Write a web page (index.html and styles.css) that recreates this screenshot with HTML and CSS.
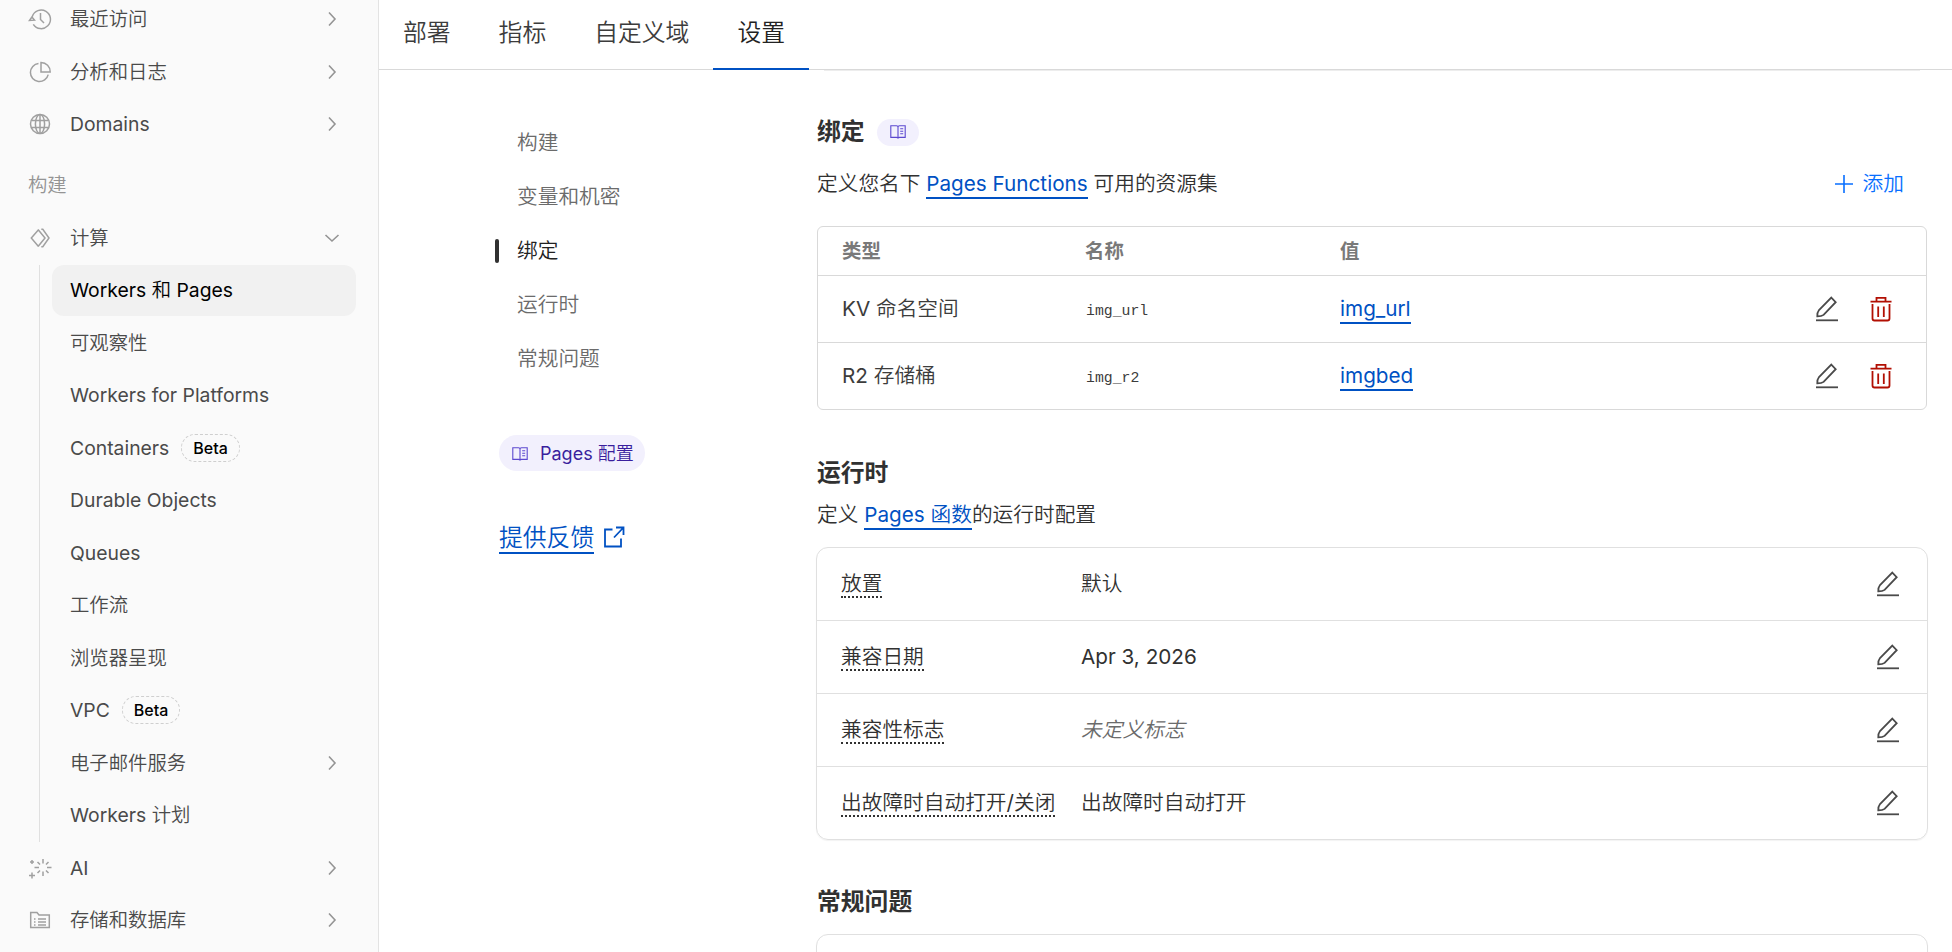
FILE: index.html
```html
<!DOCTYPE html>
<html lang="zh-CN">
<head>
    <meta charset="UTF-8">
    <meta name="viewport" content="width=device-width, initial-scale=1.0">
    <title>Workers 和 Pages - 设置</title>
    <link rel="stylesheet" href="styles.css">
</head>
<body>
    <!-- Shared icons -->
    <svg class="sprite" width="0" height="0">
        <symbol id="chevron" viewBox="0 0 16 16"><path d="M5 1.5l6 6.5-6 6.5"/></symbol>
        <symbol id="edit" viewBox="0 0 24 26">
            <path d="M16.3 1.6l4.4 4.6L8.600 18.900c-1.400 1.100-3.300 1.500-6.300 1.500-.1-2.700.3-4.700 1.700-6.400z"/>
            <path d="M1 24.300h22"/>
        </symbol>
        <symbol id="trash" viewBox="0 0 22 26">
            <path d="M.5 5.600h21M6.500 5V1.800h9V5M2.500 8v14.500q0 2 2 2h13q2 0 2-2V8M8.200 10.500v10.500M13.800 10.500v10.500"/>
        </symbol>
        <symbol id="book" viewBox="0 0 16 16">
            <path d="M.8 1.700h5.700q1.500 0 1.500 1.300v11.300q-.3-.9-1.500-.9H.8zM15.200 1.700H9.500Q8 1.700 8 3v11.300q.3-.9 1.500-.9h5.700zM10.200 4.800h3M10.200 7.300h3M10.200 9.800h3"/>
        </symbol>
    </svg>

    <div class="layout">
        <aside class="sidebar">
            <nav class="nav">
                <a class="nav-item">
                    <svg class="nav-icon" viewBox="0 0 24 24"><path d="M4.300 9.500a9.300 9.300 0 1 1 1 7.800M1.500 13.500l2.400-3.500 2.600 3.200zM12.500 6v6.500l3.500 3.500"/></svg>
                    <span>最近访问</span>
                    <svg class="chevron"><use href="#chevron"/></svg>
                </a>
                <a class="nav-item">
                    <svg class="nav-icon" viewBox="0 0 24 24"><path d="M10.500 3.600a9 9 0 1 0 9.700 11M13 2.500v9.500h9.200a9.200 9.200 0 0 0-9.200-9.500z"/></svg>
                    <span>分析和日志</span>
                    <svg class="chevron"><use href="#chevron"/></svg>
                </a>
                <a class="nav-item">
                    <svg class="nav-icon" viewBox="0 0 24 24"><circle cx="12" cy="12" r="9.500"/><ellipse cx="12" cy="12" rx="4.600" ry="9.500"/><path d="M12 2.500v19M3.500 8.500h17M3.500 15.500h17"/></svg>
                    <span>Domains</span>
                    <svg class="chevron"><use href="#chevron"/></svg>
                </a>

                <div class="nav-label">构建</div>

                <a class="nav-item">
                    <svg class="nav-icon" viewBox="0 0 24 24"><path d="M10.500 3.800L3.300 12l7.200 8.500M10 3.500l7 8.500-7 8.500M13.300 3.300h1.500l6.200 8.700-6.200 8.700h-1.500"/></svg>
                    <span>计算</span>
                    <svg class="chevron down"><use href="#chevron"/></svg>
                </a>
                <div class="subnav">
                    <a class="nav-item active">Workers 和 Pages</a>
                    <a class="nav-item">可观察性</a>
                    <a class="nav-item">Workers for Platforms</a>
                    <a class="nav-item">Containers <span class="beta">Beta</span></a>
                    <a class="nav-item">Durable Objects</a>
                    <a class="nav-item">Queues</a>
                    <a class="nav-item">工作流</a>
                    <a class="nav-item">浏览器呈现</a>
                    <a class="nav-item">VPC <span class="beta">Beta</span></a>
                    <a class="nav-item">电子邮件服务 <svg class="chevron"><use href="#chevron"/></svg></a>
                    <a class="nav-item">Workers 计划</a>
                </div>
                <a class="nav-item">
                    <svg class="nav-icon" viewBox="0 0 24 24"><path d="M15 3v4.500M15 15.500V20M6.500 11.500H11M19 11.500h4.500M9.500 6l2.500 2.500M18 14.500l2.500 2.500M20.500 6L18 8.500M12 14.500L9.500 17M4 4v4M2 6h4M4 16.500v6M1 19.500h6"/></svg>
                    <span>AI</span>
                    <svg class="chevron"><use href="#chevron"/></svg>
                </a>
                <a class="nav-item">
                    <svg class="nav-icon" viewBox="0 0 24 24"><path d="M2.700 19.500V4.500h6.300l2 2.500h10.300v12.500zM6 11h1.500M10 11h8M6 14h1.500M10 14h8M6 17h1.500M10 17h8"/></svg>
                    <span>存储和数据库</span>
                    <svg class="chevron"><use href="#chevron"/></svg>
                </a>
            </nav>
        </aside>

        <main class="main">
            <div class="tabs">
                <a class="tab">部署</a>
                <a class="tab">指标</a>
                <a class="tab">自定义域</a>
                <a class="tab active">设置</a>
            </div>

            <div class="content">
                <div class="toc">
                    <a class="toc-item">构建</a>
                    <a class="toc-item">变量和机密</a>
                    <a class="toc-item active">绑定</a>
                    <a class="toc-item">运行时</a>
                    <a class="toc-item">常规问题</a>
                    <a class="docs-pill"><svg class="book"><use href="#book"/></svg>Pages 配置</a>
                    <div class="feedback">
                        <a class="link">提供反馈</a>
                        <svg class="external" viewBox="0 0 22 22"><path d="M9.500 3.500H2v17h16v-8M13 1.500h7.500V9M20.500 1.500L11 11.500"/></svg>
                    </div>
                </div>

                <div class="settings">
                    <div class="card-end"></div>

                    <section class="bindings">
                        <h2>绑定 <span class="docs-badge"><svg class="book"><use href="#book"/></svg></span></h2>
                        <div class="desc-row">
                            <p>定义您名下 <a class="link">Pages Functions</a> 可用的资源集</p>
                            <a class="add"><svg class="plus" viewBox="0 0 18 18"><path d="M9 0v18M0 9h18"/></svg>添加</a>
                        </div>
                        <div class="table">
                            <div class="table-row table-head">
                                <span>类型</span>
                                <span>名称</span>
                                <span>值</span>
                            </div>
                            <div class="table-row">
                                <span>KV 命名空间</span>
                                <code>img_url</code>
                                <span><a class="link">img_url</a></span>
                                <svg class="edit"><use href="#edit"/></svg>
                                <svg class="trash"><use href="#trash"/></svg>
                            </div>
                            <div class="table-row">
                                <span>R2 存储桶</span>
                                <code>img_r2</code>
                                <span><a class="link">imgbed</a></span>
                                <svg class="edit"><use href="#edit"/></svg>
                                <svg class="trash"><use href="#trash"/></svg>
                            </div>
                        </div>
                    </section>

                    <section class="runtime">
                        <h2>运行时</h2>
                        <p>定义 <a class="link">Pages 函数</a>的运行时配置</p>
                        <div class="card">
                            <div class="card-row">
                                <span><span class="term">放置</span></span>
                                <span>默认</span>
                                <svg class="edit"><use href="#edit"/></svg>
                            </div>
                            <div class="card-row">
                                <span><span class="term">兼容日期</span></span>
                                <span>Apr 3, 2026</span>
                                <svg class="edit"><use href="#edit"/></svg>
                            </div>
                            <div class="card-row">
                                <span><span class="term">兼容性标志</span></span>
                                <em>未定义标志</em>
                                <svg class="edit"><use href="#edit"/></svg>
                            </div>
                            <div class="card-row">
                                <span><span class="term">出故障时自动打开/关闭</span></span>
                                <span>出故障时自动打开</span>
                                <svg class="edit"><use href="#edit"/></svg>
                            </div>
                        </div>
                    </section>

                    <section class="general">
                        <h2>常规问题</h2>
                        <div class="card">
                            <div class="card-row"></div>
                        </div>
                    </section>
                </div>
            </div>
        </main>
    </div>
</body>
</html>
```
FILE: styles.css
```css
* {
    box-sizing: border-box;
}
body {
    margin: 0;
    height: 952px;
    overflow: hidden;
    font-family: Inter, "Noto Sans CJK SC DemiLight", "Noto Sans CJK SC Light", "Noto Sans CJK SC", sans-serif;
    font-size: 20.7px;
    line-height: 1.25;
    color: #313131;
    background-color: #fff;
}
h2, p {
    margin: 0;
}
svg {
    display: block;
    flex: none;
    fill: none;
    stroke: currentColor;
}
.sprite {
    position: absolute;
}
.layout {
    display: flex;
    height: 952px;
    overflow: hidden;
}

/* Sidebar */
.sidebar {
    flex: none;
    width: 379px;
    background-color: #fafafa;
    border-right: 1px solid #e3e3e3;
    font-size: 19.35px;
    color: #4a4a4a;
}
.nav {
    /* list is scrolled a little past its top */
    margin-top: -7px;
    padding: 0 22px 0 28px;
}
.nav-item {
    display: flex;
    align-items: center;
    height: 52.5px;
    padding-right: 16px;
}
.nav-icon {
    width: 24px;
    height: 24px;
    margin-right: 18px;
    stroke-width: 1.5;
    color: #a0a0a0;
}
.chevron {
    width: 16px;
    height: 16px;
    margin-left: auto;
    stroke-width: 1.6;
    color: #949494;
}
.chevron.down {
    transform: rotate(90deg);
}
.nav-label {
    display: flex;
    align-items: center;
    height: 61px;
    padding-top: 9px;
    color: #949494;
}
.subnav {
    margin-left: 11px;
    padding-left: 12px;
    border-left: 1px solid #e0e0e0;
}
.subnav .nav-item {
    padding-left: 18px;
}
.subnav .active {
    height: 51px;
    margin: 1px 0 .5px;
    background-color: #f1f1f1;
    border-radius: 12px;
    color: #000;
}
.beta {
    margin-left: 12px;
    padding: 0 11px;
    border: 1px dashed #cfcfcf;
    border-radius: 14px;
    font-size: 16px;
    font-weight: 500;
    line-height: 26px;
    color: #000;
}

/* Tabs */
.main {
    flex: 1;
}
.tabs {
    display: flex;
    height: 70px;
    border-bottom: 1px solid #d9d9d9;
}
.tab {
    display: flex;
    align-items: center;
    height: 70px;
    padding: 0 24px 5px;
    font-size: 23.8px;
    color: #3c3c3c;
}
.tab.active {
    color: #222;
    box-shadow: inset 0 -2px #0051c3;
}
.content {
    display: grid;
    grid-template-columns: 437px 1112px;
}

/* Page contents list */
.toc {
    padding: 46px 0 0 116px;
    color: #6b6b6b;
}
.toc-item {
    display: flex;
    align-items: center;
    height: 54px;
    padding-left: 22px;
}
.toc-item.active {
    padding-left: 0;
    color: #222;
}
.toc-item.active::before {
    content: "";
    width: 4px;
    height: 24px;
    margin-right: 18px;
    border-radius: 2px;
    background-color: #313131;
}
.docs-pill {
    display: flex;
    align-items: center;
    width: 146px;
    height: 36px;
    margin: 49px 0 0 4px;
    padding: 2px 0 0 13px;
    border-radius: 18px;
    background-color: #f2f0fd;
    font-size: 18px;
    color: #3a1f9e;
    white-space: nowrap;
}
.docs-pill .book {
    margin-right: 12px;
}
.book {
    width: 16px;
    height: 16px;
    stroke-width: 1.1;
    color: #5c48cf;
}
.feedback {
    display: flex;
    align-items: center;
    height: 36px;
    margin: 48px 0 0 4px;
    font-size: 23.8px;
    color: #0051c3;
}
.feedback .link {
    margin-top: 2px;
    line-height: 29px;
    padding-bottom: 0;
}
.external {
    width: 22px;
    height: 22px;
    margin-left: 9px;
    stroke-width: 1.8;
}
.link {
    padding-bottom: 1px;
    border-bottom: 2px solid #0051c3;
    color: #0051c3;
}

/* Settings */
.card-end {
    height: 1px;
    margin: 0 8px;
    background-color: #ededed;
}
h2 {
    display: flex;
    align-items: center;
    height: 36px;
    padding-left: 1px;
    font-size: 23.8px;
    font-weight: 700;
    font-family: Inter, "Noto Sans CJK SC", sans-serif;
}
p {
    padding-left: 1px;
    line-height: 30px;
}
.bindings {
    padding-top: 43px;
}
.docs-badge {
    display: flex;
    align-items: center;
    justify-content: center;
    width: 42px;
    height: 27px;
    margin-left: 12px;
    border-radius: 14px;
    background-color: #f2f0fd;
}
.desc-row {
    display: flex;
    justify-content: space-between;
    height: 30px;
    margin-top: 19px;
    padding-right: 24px;
}
.add {
    display: flex;
    align-items: center;
    color: #086fff;
}
.plus {
    width: 18px;
    height: 18px;
    margin-right: 10px;
    stroke-width: 1.6;
}
.table {
    margin: 27px 1px 0;
    border: 1px solid #d9d9d9;
    border-radius: 6px;
}
.table-row {
    display: grid;
    grid-template-columns: 243px 255px 475px 55px 22px;
    align-items: center;
    height: 67px;
    padding-left: 24px;
    border-top: 1px solid #d9d9d9;
    color: #3c3c3c;
}
.table-head {
    height: 48px;
    border-top: none;
    font-size: 19.4px;
    font-weight: 700;
    font-family: Inter, "Noto Sans CJK SC", sans-serif;
    color: #797979;
}
code {
    padding: 4px 0 0 1px;
    font-family: "Liberation Mono", monospace;
    font-size: 14.8px;
}
.edit {
    width: 24px;
    height: 26px;
    stroke-width: 1.8;
    color: #4a4a4a;
}
.trash {
    width: 22px;
    height: 26px;
    stroke-width: 1.8;
    color: #b20f03;
}
.runtime {
    padding-top: 45px;
}
.runtime p {
    margin-top: 9px;
}
.card {
    margin-top: 17px;
    border: 1px solid #e0e0e0;
    border-radius: 12px;
    box-shadow: 0 1px 1px rgba(0,0,0,0.05);
}
.card-row {
    display: grid;
    grid-template-columns: 240px 795px 24px;
    align-items: center;
    height: 73px;
    padding-left: 24px;
    border-top: 1px solid #e0e0e0;
}
.card-row:first-child {
    height: 72px;
    border-top: none;
}
.term {
    display: inline-block;
    line-height: 25px;
    border-bottom: 2px dotted #313131;
}
em {
    color: #6b6b6b;
}
.general {
    padding-top: 44px;
}
.general .card {
    margin-top: 14px;
}
```
